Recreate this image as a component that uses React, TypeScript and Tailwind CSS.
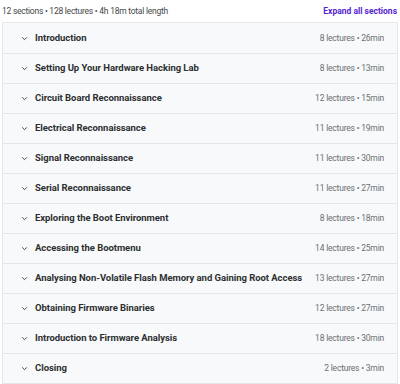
const sections = [
  { title: "Introduction", lectures: 8, length: "26min" },
  { title: "Setting Up Your Hardware Hacking Lab", lectures: 8, length: "13min" },
  { title: "Circuit Board Reconnaissance", lectures: 12, length: "15min" },
  { title: "Electrical Reconnaissance", lectures: 11, length: "19min" },
  { title: "Signal Reconnaissance", lectures: 11, length: "30min" },
  { title: "Serial Reconnaissance", lectures: 11, length: "27min" },
  { title: "Exploring the Boot Environment", lectures: 8, length: "18min" },
  { title: "Accessing the Bootmenu", lectures: 14, length: "25min" },
  { title: "Analysing Non-Volatile Flash Memory and Gaining Root Access", lectures: 13, length: "27min" },
  { title: "Obtaining Firmware Binaries", lectures: 12, length: "27min" },
  { title: "Introduction to Firmware Analysis", lectures: 18, length: "30min" },
  { title: "Closing", lectures: 2, length: "3min" },
];

function Chevron() {
  return (
    <svg width="7" height="7" viewBox="0 0 24 24" fill="none" stroke="#2d2f31" strokeWidth="3" strokeLinecap="round" strokeLinejoin="round">
      <path d="M5 9l7 7 7-7" />
    </svg>
  );
}

export default function App() {
  return (
    <div className="w-[400px] h-[384px] bg-white overflow-hidden font-['Roboto',_'Liberation_Sans',_sans-serif]">
      <div className="flex items-center justify-between h-[22px] pl-[2px] pr-[3px]">
        <span className="text-[8.5px] tracking-[-0.25px] text-[#45484a]">12 sections • 128 lectures • 4h 18m total length</span>
        <span className="text-[8.5px] font-bold text-[#5624d0]">Expand all sections</span>
      </div>
      <div className="mx-[2px] border border-[#e4e8eb]">
        {sections.map((s, i) => (
          <div
            key={s.title}
            className={`flex items-center h-[30px] bg-[#f7f9fa] pl-[18px] pr-[13px] ${i > 0 ? "border-t border-[#e4e8eb]" : ""}`}
          >
            <Chevron />
            <span className="ml-[7px] text-[9.5px] tracking-[-0.05px] font-bold text-[#2d2f31] flex-1 whitespace-nowrap">{s.title}</span>
            <span className="text-[8.5px] tracking-[-0.2px] text-[#6a6f73] ml-2 whitespace-nowrap">
              {s.lectures} lectures • {s.length}
            </span>
          </div>
        ))}
      </div>
    </div>
  );
}
